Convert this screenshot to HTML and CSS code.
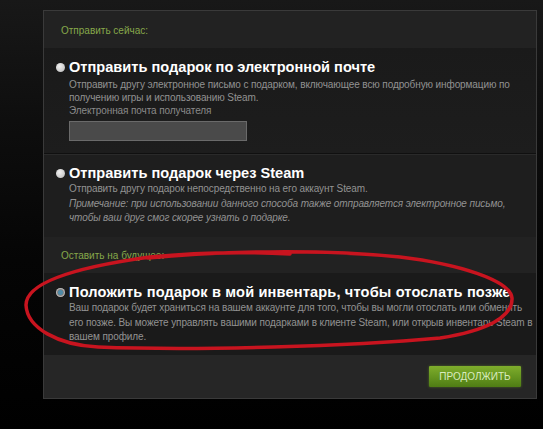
FILE: index.html
```html
<!DOCTYPE html>
<html lang="ru">
<head>
<meta charset="utf-8">
<title>Отправить подарок</title>
<link rel="stylesheet" href="styles.css">
</head>
<body>
<div class="page">
  <div class="panel">
    <div class="band">Отправить сейчас:</div>
    <div class="option opt-email">
      <div class="head"><span class="radio"></span><span class="title">Отправить подарок по электронной почте</span></div>
      <div class="desc">
        <div>Отправить другу электронное письмо с подарком, включающее всю подробную информацию по</div>
        <div>получению игры и использованию Steam.</div>
        <div class="label">Электронная почта получателя</div>
        <div class="input"></div>
      </div>
    </div>
    <div class="option opt-steam">
      <div class="head"><span class="radio"></span><span class="title">Отправить подарок через Steam</span></div>
      <div class="desc">
        <div>Отправить другу подарок непосредственно на его аккаунт Steam.</div>
        <div class="note">Примечание: при использовании данного способа также отправляется электронное письмо,</div>
        <div class="note">чтобы ваш друг смог скорее узнать о подарке.</div>
      </div>
    </div>
    <div class="band band2">Оставить на будущее:</div>
    <div class="option opt-inv">
      <div class="head"><span class="radio on"></span><span class="title title-wide">Положить подарок в мой инвентарь, чтобы отослать позже</span></div>
      <div class="desc">
        <div>Ваш подарок будет храниться на вашем аккаунте для того, чтобы вы могли отослать или обменять</div>
        <div>его позже. Вы можете управлять вашими подарками в клиенте Steam, или открыв инвентарь Steam в</div>
        <div>вашем профиле.</div>
      </div>
    </div>
    <div class="footer"><span class="btn">Продолжить</span></div>
  </div>
  <svg class="scribble" width="543" height="429" viewBox="0 0 543 429">
    <path d="M148 258 C 220 251, 320 249, 400 257 C 458 264, 510 280, 512 298 C 513 317, 486 331, 440 338 C 350 346, 200 351, 98 347 C 58 345, 27 328, 26 305 C 26 284, 70 268, 150 257 C 200 252, 250 252, 290 254" fill="none" stroke="#c8141f" stroke-width="3.5" stroke-linecap="round" stroke-linejoin="round"/>
  </svg>
</div>
</body>
</html>
```
FILE: styles.css
```css
html, body {
  margin: 0;
  padding: 0;
}
body {
  background: linear-gradient(180deg, #181818 0px, #0e0e0e 120px, #050505 260px, #000 429px);
  font-family: "Liberation Sans", Arial, sans-serif;
  width: 543px;
  height: 429px;
  overflow: hidden;
}
.page {
  position: relative;
  width: 543px;
  height: 429px;
  padding: 10px 0 0 43px;
  box-sizing: border-box;
}
.panel {
  width: 494px;
  box-sizing: border-box;
  border: 1px solid #3a3a3a;
  background: #1b1b1b;
}
.band {
  height: 37px;
  box-sizing: border-box;
  padding: 13px 0 0 17px;
  font-size: 10px;
  line-height: 13px;
  color: #86a84a;
  background: #222222;
}
.band2 {
  height: 36px;
  padding-top: 12px;
}
.option {
  box-sizing: border-box;
  padding: 10px 0 0 12px;
}
.opt-email {
  height: 106px;
  background: linear-gradient(180deg, #1a1a1a, #1d1d1d);
  border-bottom: 1px solid #101010;
}
.opt-email .desc {
  margin-top: 2px;
  line-height: 13px;
}
.opt-steam {
  height: 83px;
  padding-top: 9px;
  background: #1e1e1e;
  border-top: 1px solid #2a2a2a;
}
.opt-inv {
  height: 82px;
  background: #1a1a1a;
}
.head {
  display: flex;
  align-items: center;
  gap: 4px;
  height: 18px;
}
.radio {
  width: 9px;
  height: 9px;
  border-radius: 50%;
  background: radial-gradient(circle at 40% 35%, #f0f0f0, #b8b8b8);
  flex: none;
}
.radio.on {
  background: radial-gradient(circle, #4f8aa6 0 2.2px, #7a7a7a 2.8px, #d0d0d0 4.5px);
}
.title {
  font-size: 14.6px;
  font-weight: bold;
  color: #ffffff;
  line-height: 18px;
  white-space: nowrap;
}
.title-wide {
  letter-spacing: 0.15px;
}
.desc {
  padding-left: 13px;
  font-size: 10px;
  letter-spacing: -0.1px;
  line-height: 14.5px;
  color: #929292;
  white-space: nowrap;
}
.note {
  font-style: italic;
}
.label {
  color: #8a8a8a;
}
.input {
  margin-top: 4px;
  width: 176px;
  height: 18px;
  background: #4a4a4a;
  border: 1px solid #6a6a6a;
}
.footer {
  display: flex;
  justify-content: flex-end;
  padding: 11px 15px 11px 0;
  background: #262626;
}
.btn {
  display: block;
  width: 92px;
  height: 21px;
  box-sizing: border-box;
  text-align: center;
  font-size: 10px;
  line-height: 21px;
  text-transform: uppercase;
  color: #d9ebbf;
  background: linear-gradient(180deg, #7fad2c 0%, #669620 50%, #4f7c14 100%);
  box-shadow: 0 0 3px rgba(120, 170, 40, 0.5);
  border-radius: 1px;
}
.scribble {
  position: absolute;
  left: 0;
  top: 0;
  pointer-events: none;
}
```
